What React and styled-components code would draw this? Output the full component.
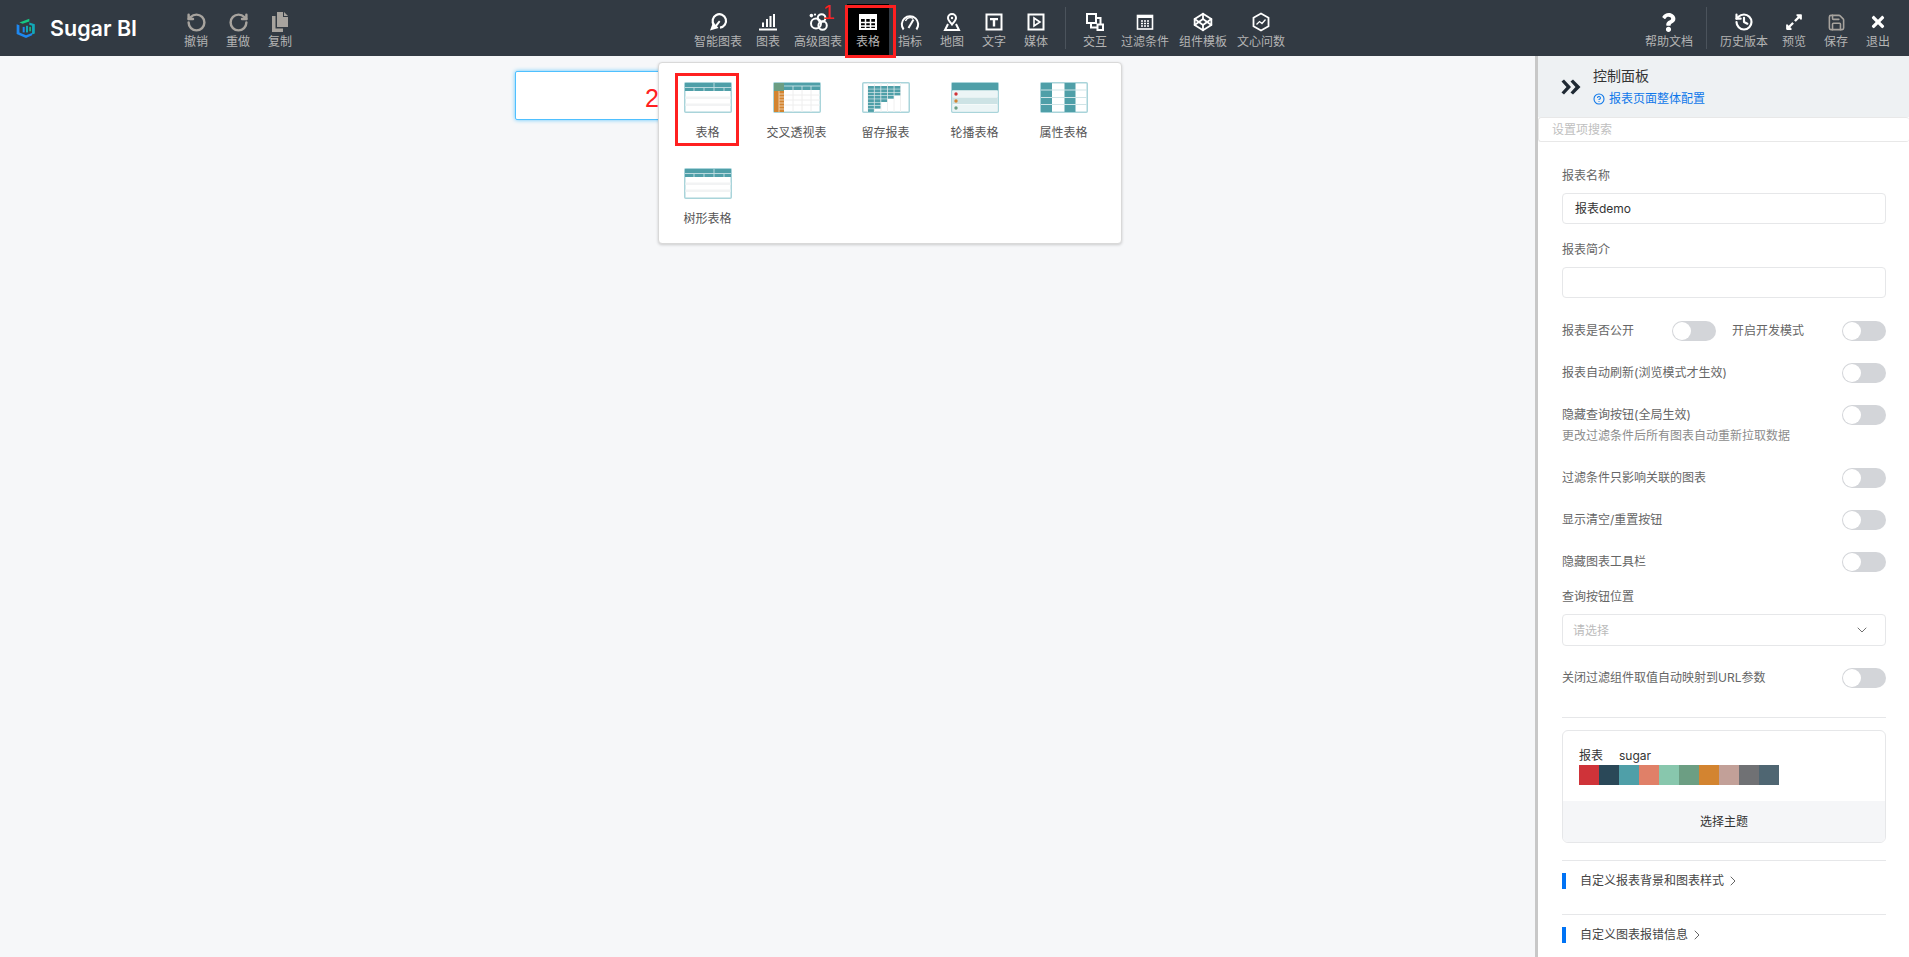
import styled, { createGlobalStyle } from 'styled-components'
import { RotateCcw, RotateCw, Codepen, History, Save, ChevronDown, ChevronRight, CircleHelp } from 'lucide-react'
import { FaQuestion, FaExpandAlt, FaTimes } from 'react-icons/fa'

const GlobalStyle = createGlobalStyle`
  html, body {
    margin: 0;
    padding: 0;
    background: #f6f7f9;
    font-family: Inter, "Noto Sans CJK SC", sans-serif;
  }
  * { box-sizing: border-box; }
`

const Logo = () => (
  <svg width="22" height="22" viewBox="0 0 20 20">
    <path d="M4 5 L13 1.5 L13 4 L7 6.2 L4 5Z" fill="#16c784" />
    <path d="M13 5 L18 6.5 L18 15 L15.5 16 L15.5 8 L13 7Z" fill="#12a8b8" />
    <path d="M1.5 6.5 L4 7.5 L4 14 L10 16.5 L15.5 14.5 L15.5 16.5 L10 19 L1.5 15.5Z" fill="#1e88f0" />
    <rect x="7" y="9" width="1.8" height="5" fill="#1e88f0" />
    <rect x="10" y="8" width="1.8" height="6" fill="#12a8b8" />
    <rect x="13" y="9" width="1.4" height="4" fill="#16c784" />
  </svg>
)

const CopyIcon = () => (
  <svg width="18" height="20" viewBox="0 0 18 20" fill="#a7a39e">
    <path d="M6 0 H12 V5 H17 V15 H6Z" />
    <path d="M13 0 L17 4 H13Z" />
    <path d="M1 4 H4.5 V16.5 H12 V20 H1Z" />
  </svg>
)

const SmartIcon = () => (
  <svg width="20" height="20" viewBox="0 0 20 20" fill="none">
    <path d="M6 13 A6.7 6.7 0 1 1 12 15.6" stroke="#fff" strokeWidth="2.2" />
    <path d="M2 18.5 L5 10.5 L7.5 12.8 L11 8.5 L12.4 9.8 L9 14.3 L10.5 16Z" fill="#fff" />
  </svg>
)

const BarsIcon = () => (
  <svg width="20" height="20" viewBox="0 0 20 20" fill="#fff">
    <rect x="1" y="16.5" width="18" height="2" />
    <rect x="4" y="10.5" width="2" height="4.5" />
    <rect x="8" y="7" width="2" height="8" />
    <rect x="11.5" y="4" width="2" height="11" />
    <rect x="15" y="2" width="2" height="13" />
  </svg>
)

const AdvancedIcon = () => (
  <svg width="20" height="20" viewBox="0 0 20 20" fill="none" stroke="#fff" strokeWidth="2">
    <circle cx="8" cy="11.5" r="5" />
    <circle cx="14.6" cy="13.5" r="4.2" />
    <circle cx="13.6" cy="6" r="3.8" />
    <circle cx="3.4" cy="3.6" r="1.8" fill="#fff" stroke="none" />
    <circle cx="7" cy="2.6" r="1.1" fill="#fff" stroke="none" />
  </svg>
)

const TableIcon = () => (
  <svg width="20" height="20" viewBox="0 0 20 20" fill="none">
    <rect x="2" y="3" width="16" height="14" stroke="#fff" strokeWidth="2" />
    <rect x="2" y="3" width="16" height="4" fill="#fff" />
    <path d="M2 10.5 H18 M2 14 H18 M7.5 7 V17 M12.5 7 V17" stroke="#fff" strokeWidth="1.5" />
  </svg>
)

const GaugeIcon = () => (
  <svg width="20" height="20" viewBox="0 0 20 20" fill="none" stroke="#fff">
    <path d="M3.6 17.5 A8.2 8.2 0 1 1 16.4 17.5" strokeWidth="2" />
    <path d="M5.5 9 A5 5 0 0 1 13 6.5" strokeWidth="1.4" />
    <path d="M8.5 16 L13.5 7.5" strokeWidth="2" />
  </svg>
)

const MapIcon = () => (
  <svg width="20" height="20" viewBox="0 0 20 20" fill="none" stroke="#fff" strokeWidth="2">
    <path d="M10 12.5 C7.5 9.5 6 8 6 6 A4 4 0 0 1 14 6 C14 8 12.5 9.5 10 12.5Z" />
    <circle cx="10" cy="6" r="1.2" fill="#fff" stroke="none" />
    <path d="M6 12 L3 18 H17 L14 12" />
  </svg>
)

const TextIcon = () => (
  <svg width="20" height="20" viewBox="0 0 20 20" fill="none">
    <rect x="2.5" y="2.5" width="15" height="15" stroke="#fff" strokeWidth="2" />
    <path d="M6 6 H14 V8.2 H11.2 V14.5 H8.8 V8.2 H6Z" fill="#fff" />
  </svg>
)

const MediaIcon = () => (
  <svg width="20" height="20" viewBox="0 0 20 20" fill="none">
    <rect x="2.5" y="2.5" width="15" height="15" stroke="#fff" strokeWidth="2" />
    <path d="M8 6 L14 10 L8 14Z" stroke="#fff" strokeWidth="1.6" />
  </svg>
)

const InteractIcon = () => (
  <svg width="20" height="20" viewBox="0 0 20 20" fill="none" stroke="#fff" strokeWidth="2">
    <rect x="2" y="2" width="9" height="9" />
    <rect x="12.5" y="12.5" width="5.5" height="5.5" />
    <path d="M11 6 H15.5 V12.5 M6 11 V15.5 H12.5" />
  </svg>
)

const FilterIcon = () => (
  <svg width="20" height="20" viewBox="0 0 20 20" fill="none">
    <rect x="2.5" y="3.5" width="15" height="13.5" stroke="#fff" strokeWidth="1.6" />
    <rect x="2" y="3" width="16" height="3" fill="#fff" />
    <path d="M6 9 H14 M6 11.5 H14 M6 14 H14" stroke="#fff" strokeWidth="1.5" strokeDasharray="2 1" />
  </svg>
)

const AskIcon = () => (
  <svg width="20" height="20" viewBox="0 0 20 20" fill="none" stroke="#fff">
    <path d="M10 1.5 L17.5 5.7 V14.3 L10 18.5 L2.5 14.3 V5.7Z" strokeWidth="1.8" />
    <path d="M5.5 12.5 L8.5 9.5 L11 11.5 L14.5 7.5" strokeWidth="1.3" />
  </svg>
)

const CollapseIcon = () => (
  <svg width="20" height="16" viewBox="0 0 20 16" fill="#1f2933">
    <path d="M0.5 2.5 L3 0.5 L10 8 L3 15.5 L0.5 13.5 L5.5 8Z" />
    <path d="M9.5 2.5 L12 0.5 L19.5 8 L12 15.5 L9.5 13.5 L14.5 8Z" />
  </svg>
)

const Frame = ({ children }) => (
  <svg width="48" height="31" viewBox="0 0 48 31">
    <rect x="0.75" y="0.75" width="46.5" height="29.5" rx="1" fill="#fff" stroke="#a9d4da" strokeWidth="1.5" />
    {children}
  </svg>
)

const PlainThumb = () => (
  <Frame>
    <rect x="1" y="1" width="46" height="8" fill="#4f9fa8" />
    <path d="M1 5.5 H47 M30 1 V5.5" stroke="#d5e9ec" strokeWidth="0.8" />
    <path d="M10 6 V9 M20 6 V9 M30 6 V9 M40 6 V9" stroke="#d5e9ec" strokeWidth="0.8" />
    <rect x="1.5" y="14.5" width="45" height="2.5" fill="#f2f3f4" />
    <rect x="1.5" y="21.5" width="45" height="2.5" fill="#f2f3f4" />
  </Frame>
)

const CrossThumb = () => (
  <Frame>
    <rect x="1" y="1" width="10" height="8" fill="#6c9e83" />
    <rect x="1" y="9" width="10" height="21" fill="#d38430" />
    <path d="M6 12 H11 M6 15 H11 M6 18 H11 M6 21 H11 M6 24 H11 M6 27 H11 M6 9 V30" stroke="#f3dcc2" strokeWidth="0.8" />
    <rect x="11" y="1" width="36" height="7" fill="#4f9fa8" />
    <path d="M11 4 H47 M20 4 V8 M29 4 V8 M38 4 V8" stroke="#d5e9ec" strokeWidth="0.8" />
    <path d="M20 8 V30 M29 8 V30 M38 8 V30 M11 13 H47 M11 18 H47 M11 23 H47" stroke="#eeeeee" strokeWidth="1" />
  </Frame>
)

const retention = [5, 5, 5, 4, 3, 2, 2, 1]

const RetentionThumb = () => (
  <Frame>
    <path d="M6 1 V30 M12.5 1 V30 M19 1 V30 M25.5 1 V30 M32 1 V30 M38.5 1 V30" stroke="#f0f0f0" strokeWidth="1" />
    {retention.map((count, row) =>
      Array.from({ length: count }).map((_, col) => (
        <rect key={`${row}-${col}`} x={6 + col * 6.6} y={4 + row * 3.3} width="5.9" height="2.8" fill="#4f9fa8" />
      ))
    )}
  </Frame>
)

const CarouselThumb = () => (
  <Frame>
    <rect x="1" y="1" width="46" height="7.5" fill="#4f9fa8" />
    <rect x="1.5" y="8.5" width="45" height="6.5" fill="#ecf5f6" />
    <rect x="1.5" y="15.5" width="45" height="6.5" fill="#cde3e5" />
    <rect x="1.5" y="22.5" width="45" height="7" fill="#ecf5f6" />
    <circle cx="5" cy="12" r="1.7" fill="#d13337" />
    <circle cx="5" cy="19" r="1.7" fill="#d38430" />
    <circle cx="5" cy="26" r="1.7" fill="#6c9e83" />
  </Frame>
)

const PropertyThumb = () => (
  <Frame>
    <rect x="1" y="1" width="11" height="29" fill="#4f9fa8" />
    <rect x="24.5" y="1" width="11" height="29" fill="#4f9fa8" />
    <path d="M1 8 H47 M1 15.5 H47 M1 22.5 H47" stroke="#cfe4e7" strokeWidth="1" />
  </Frame>
)

const leftTools = [
  { label: '撤销', icon: <RotateCcw size={21} color="#a7a39e" strokeWidth={2.8} /> },
  { label: '重做', icon: <RotateCw size={21} color="#a7a39e" strokeWidth={2.8} /> },
  { label: '复制', icon: <CopyIcon /> },
]

const chartTools = [
  { label: '智能图表', icon: <SmartIcon /> },
  { label: '图表', icon: <BarsIcon /> },
  { label: '高级图表', icon: <AdvancedIcon /> },
  { label: '表格', icon: <TableIcon />, active: true },
  { label: '指标', icon: <GaugeIcon /> },
  { label: '地图', icon: <MapIcon /> },
  { label: '文字', icon: <TextIcon /> },
  { label: '媒体', icon: <MediaIcon /> },
]

const extraTools = [
  { label: '交互', icon: <InteractIcon /> },
  { label: '过滤条件', icon: <FilterIcon /> },
  { label: '组件模板', icon: <Codepen size={20} color="#fff" strokeWidth={2.2} /> },
  { label: '文心问数', icon: <AskIcon /> },
]

const thumbs = [
  { label: '表格', thumb: <PlainThumb /> },
  { label: '交叉透视表', thumb: <CrossThumb /> },
  { label: '留存报表', thumb: <RetentionThumb /> },
  { label: '轮播表格', thumb: <CarouselThumb /> },
  { label: '属性表格', thumb: <PropertyThumb /> },
  { label: '树形表格', thumb: <PlainThumb /> },
]

const swatches = ['#cf3339', '#2a4858', '#4f9fa8', '#e08068', '#88c7ad', '#6c9e83', '#d38430', '#c2a098', '#707174', '#4f6672']

const Tool = ({ tool }) => (
  <ToolItem $active={tool.active}>
    <ToolIcon>{tool.icon}</ToolIcon>
    <ToolLabel>{tool.label}</ToolLabel>
  </ToolItem>
)

const App = () => (
  <Page>
    <GlobalStyle />
    <TopBar>
      <Brand>
        <Logo />
        <BrandName>Sugar BI</BrandName>
      </Brand>
      <ToolGroup>
        {leftTools.map(tool => <Tool key={tool.label} tool={tool} />)}
      </ToolGroup>
      <CenterTools>
        {chartTools.map(tool => <Tool key={tool.label} tool={tool} />)}
        <Divider />
        {extraTools.map(tool => <Tool key={tool.label} tool={tool} />)}
      </CenterTools>
      <RightTools>
        <Tool tool={{ label: '帮助文档', icon: <FaQuestion size={19} color="#fff" /> }} />
        <Divider />
        <Tool tool={{ label: '历史版本', icon: <History size={20} color="#fff" strokeWidth={2.6} /> }} />
        <Tool tool={{ label: '预览', icon: <FaExpandAlt size={18} color="#fff" /> }} />
        <Tool tool={{ label: '保存', icon: <Save size={19} color="#a7a39e" strokeWidth={2} /> }} />
        <Tool tool={{ label: '退出', icon: <FaTimes size={18} color="#fff" /> }} />
      </RightTools>
    </TopBar>

    <Main>
      <Canvas>
        <SelectedChart />
      </Canvas>
      <Panel>
        <PanelHeader>
          <CollapseIcon />
          <PanelTitles>
            <PanelTitle>控制面板</PanelTitle>
            <PanelLink>
              <CircleHelp size={12} strokeWidth={2.2} />
              报表页面整体配置
            </PanelLink>
          </PanelTitles>
        </PanelHeader>
        <SearchBox>设置项搜索</SearchBox>
        <PanelBody>
          <FieldLabel>报表名称</FieldLabel>
          <TextBox>报表demo</TextBox>
          <FieldLabel $top={16}>报表简介</FieldLabel>
          <TextBox />
          <SwitchRow $top={23}>
            <SwitchLabel $width={110}>报表是否公开</SwitchLabel>
            <Switch />
            <SwitchLabel $left={16}>开启开发模式</SwitchLabel>
            <Switch />
          </SwitchRow>
          <SwitchRow>
            <SwitchLabel>报表自动刷新(浏览模式才生效)</SwitchLabel>
            <Switch />
          </SwitchRow>
          <SwitchRow>
            <SwitchLabel>隐藏查询按钮(全局生效)</SwitchLabel>
            <Switch />
          </SwitchRow>
          <Hint>更改过滤条件后所有图表自动重新拉取数据</Hint>
          <SwitchRow $top={22}>
            <SwitchLabel>过滤条件只影响关联的图表</SwitchLabel>
            <Switch />
          </SwitchRow>
          <SwitchRow>
            <SwitchLabel>显示清空/重置按钮</SwitchLabel>
            <Switch />
          </SwitchRow>
          <SwitchRow>
            <SwitchLabel>隐藏图表工具栏</SwitchLabel>
            <Switch />
          </SwitchRow>
          <FieldLabel $top={15}>查询按钮位置</FieldLabel>
          <SelectBox>
            请选择
            <ChevronDown size={16} color="#666" strokeWidth={1.4} />
          </SelectBox>
          <SwitchRow>
            <SwitchLabel>关闭过滤组件取值自动映射到URL参数</SwitchLabel>
            <Switch />
          </SwitchRow>
          <Rule $top={29} />
          <ThemeCard>
            <ThemeTop>
              <ThemeName>
                <span>报表</span>
                <span>sugar</span>
              </ThemeName>
              <SwatchRow>
                {swatches.map(color => <Swatch key={color} $color={color} />)}
              </SwatchRow>
            </ThemeTop>
            <ThemeFooter>选择主题</ThemeFooter>
          </ThemeCard>
          <Rule $top={17} />
          <SectionRow>
            <SectionTitle>
              自定义报表背景和图表样式
              <ChevronRight size={16} color="#666" strokeWidth={1.5} />
            </SectionTitle>
          </SectionRow>
          <Rule $top={25} />
          <SectionRow>
            <SectionTitle>
              自定义图表报错信息
              <ChevronRight size={16} color="#666" strokeWidth={1.5} />
            </SectionTitle>
          </SectionRow>
        </PanelBody>
      </Panel>
    </Main>

    <Dropdown>
      {thumbs.map(item => (
        <ThumbItem key={item.label}>
          {item.thumb}
          <ThumbLabel>{item.label}</ThumbLabel>
        </ThumbItem>
      ))}
    </Dropdown>

    <MarkBox $left={845} $top={5} $width={51} $height={53} />
    <MarkBox $left={675} $top={73} $width={64} $height={73} />
    <MarkNumber $left={823} $top={-1} $size={21}>1</MarkNumber>
    <MarkNumber $left={645} $top={83} $size={25}>2</MarkNumber>
  </Page>
)

const Page = styled.div`
  position: relative;
  display: flex;
  flex-direction: column;
  height: 957px;
  overflow: hidden;
`

const TopBar = styled.div`
  display: flex;
  flex: none;
  height: 56px;
  background-color: #323a43;
`

const Brand = styled.div`
  display: flex;
  align-items: center;
  width: 175px;
  padding-left: 15px;
`

const BrandName = styled.div`
  margin-left: 13px;
  color: #fff;
  font-size: 21.5px;
  font-weight: 600;
`

const ToolGroup = styled.div`
  display: flex;
`

const CenterTools = styled(ToolGroup)`
  margin-left: 388px;
`

const RightTools = styled(ToolGroup)`
  margin-left: auto;
  padding-right: 10px;
`

const ToolItem = styled.div`
  display: flex;
  flex-direction: column;
  align-items: center;
  min-width: 42px;
  height: ${props => (props.$active ? '52px' : '56px')};
  margin-top: ${props => (props.$active ? '4px' : '0')};
  padding: ${props => (props.$active ? '8px' : '12px')} 5px 0;
  background-color: ${props => (props.$active ? '#000' : 'transparent')};
`

const ToolIcon = styled.div`
  display: flex;
  align-items: center;
  justify-content: center;
  height: 20px;
  margin-bottom: 3px;
`

const ToolLabel = styled.div`
  color: #b4b4b4;
  font-size: 12px;
  line-height: 14px;
  white-space: nowrap;
`

const Divider = styled.div`
  align-self: center;
  width: 1px;
  height: 42px;
  margin: 0 8px;
  background-color: #4b535c;
`

const Main = styled.div`
  display: flex;
  flex: 1;
  min-height: 0;
`

const Canvas = styled.div`
  position: relative;
  flex: 1;
  background-color: #f6f7f9;
`

const SelectedChart = styled.div`
  position: absolute;
  left: 515px;
  top: 15px;
  width: 500px;
  height: 49px;
  border: 1px solid #4fc0ff;
  border-radius: 2px;
  background-color: #fff;
  box-shadow: 0 0 4px #5fc8ff;
`

const Panel = styled.div`
  flex: none;
  width: 374px;
  border-left: 3px solid #c8c8c8;
  background-color: #fff;
`

const PanelHeader = styled.div`
  display: flex;
  align-items: center;
  height: 61px;
  padding-left: 23px;
  background-color: #eef1f3;
`

const PanelTitles = styled.div`
  display: flex;
  flex-direction: column;
  margin-left: 12px;
`

const PanelTitle = styled.div`
  color: #333;
  font-size: 14px;
  line-height: 20px;
`

const PanelLink = styled.div`
  display: flex;
  align-items: center;
  gap: 4px;
  margin-top: 4px;
  color: #0f78ea;
  font-size: 12px;
  line-height: 17px;
`

const SearchBox = styled.div`
  height: 25px;
  padding-left: 13px;
  border: 1px solid #e8e8e8;
  border-radius: 3px;
  border-right: none;
  color: #c0c0c0;
  font-size: 12px;
  line-height: 23px;
`

const PanelBody = styled.div`
  display: flex;
  flex-direction: column;
  padding: 24px 23px 0 24px;
`

const FieldLabel = styled.div`
  margin-top: ${props => props.$top || 0}px;
  color: #666;
  font-size: 12px;
  line-height: 20px;
`

const TextBox = styled.div`
  height: 31px;
  margin-top: 7px;
  padding-left: 12px;
  border: 1px solid #e6e7e9;
  border-radius: 4px;
  color: #333;
  font-size: 12px;
  line-height: 29px;
`

const SelectBox = styled(TextBox)`
  display: flex;
  align-items: center;
  justify-content: space-between;
  height: 32px;
  padding: 0 15px 0 10px;
  color: #bbb;
`

const SwitchRow = styled.div`
  display: flex;
  align-items: center;
  height: 20px;
  margin-top: ${props => props.$top || 22}px;
`

const SwitchLabel = styled.div`
  flex: ${props => (props.$width ? 'none' : '1')};
  width: ${props => (props.$width ? `${props.$width}px` : 'auto')};
  margin-left: ${props => props.$left || 0}px;
  color: #666;
  font-size: 12px;
  line-height: 20px;
`

const Switch = styled.div`
  position: relative;
  flex: none;
  width: 44px;
  height: 20px;
  border-radius: 10px;
  background-color: #d3d5d9;

  &::after {
    content: '';
    position: absolute;
    left: 1px;
    top: 1px;
    width: 18px;
    height: 18px;
    border-radius: 50%;
    background-color: #fff;
  }
`

const Hint = styled.div`
  margin-top: 1px;
  color: #8c8c8c;
  font-size: 12px;
  line-height: 20px;
`

const Rule = styled.div`
  flex: none;
  height: 1px;
  margin-top: ${props => props.$top}px;
  background-color: #e6e7e9;
`

const ThemeCard = styled.div`
  margin-top: 12px;
  border: 1px solid #e6e7e9;
  border-radius: 6px;
  overflow: hidden;
`

const ThemeTop = styled.div`
  padding: 16px;
`

const ThemeName = styled.div`
  display: flex;
  gap: 16px;
  color: #333;
  font-size: 12px;
  line-height: 18px;
`

const SwatchRow = styled.div`
  display: flex;
`

const Swatch = styled.div`
  width: 20px;
  height: 20px;
  background-color: ${props => props.$color};
`

const ThemeFooter = styled.div`
  height: 41px;
  background-color: #f5f6f8;
  color: #333;
  font-size: 12px;
  line-height: 41px;
  text-align: center;
`

const SectionRow = styled.div`
  height: 16px;
  margin-top: 12px;
  border-left: 4px solid #0073f5;
`

const SectionTitle = styled.div`
  display: flex;
  align-items: center;
  gap: 1px;
  padding-left: 14px;
  color: #444;
  font-size: 12px;
  line-height: 16px;
`

const Dropdown = styled.div`
  position: absolute;
  left: 658px;
  top: 62px;
  display: grid;
  grid-template-columns: repeat(5, 89px);
  grid-auto-rows: 86px;
  align-content: start;
  width: 464px;
  height: 182px;
  padding: 19px 0 0 4px;
  border: 1px solid #d9d9d9;
  border-radius: 4px;
  background-color: #fff;
  box-shadow: 0 1px 3px rgba(0, 0, 0, 0.18);
`

const ThumbItem = styled.div`
  display: flex;
  flex-direction: column;
  align-items: center;
`

const ThumbLabel = styled.div`
  margin-top: 11px;
  color: #555;
  font-size: 12px;
  line-height: 17px;
  white-space: nowrap;
`

const MarkBox = styled.div`
  position: absolute;
  left: ${props => props.$left}px;
  top: ${props => props.$top}px;
  width: ${props => props.$width}px;
  height: ${props => props.$height}px;
  border: 3px solid #ff2020;
`

const MarkNumber = styled.div`
  position: absolute;
  left: ${props => props.$left}px;
  top: ${props => props.$top}px;
  color: #ff2020;
  font-family: "Liberation Sans", sans-serif;
  font-size: ${props => props.$size}px;
  line-height: 1.2;
`

export default App
